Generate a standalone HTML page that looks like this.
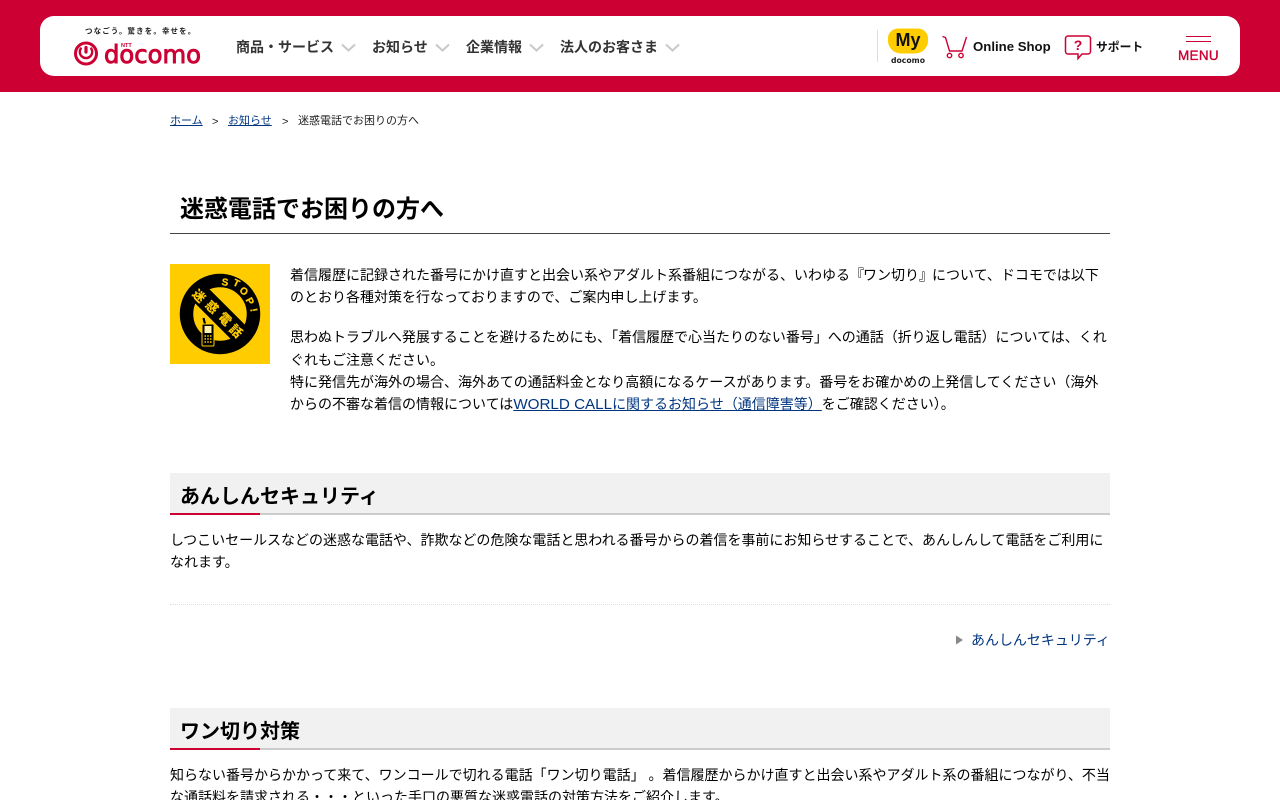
<!DOCTYPE html>
<html lang="ja"><head><meta charset="utf-8"><title>迷惑電話でお困りの方へ</title>
<style>
html,body{margin:0;padding:0;background:#fff;width:1280px;height:800px;overflow:hidden}
body{font-family:"Liberation Sans","Noto Sans CJK JP",sans-serif;color:#000;position:relative}
a{color:#003580}
.l{position:absolute;white-space:nowrap;font-size:14px;line-height:22px;left:170px;letter-spacing:0}
.t{left:290px}
.hdr{position:absolute;left:0;top:0;width:1280px;height:92px;background:#cc0033}
.bar{position:absolute;left:40px;top:16px;width:1200px;height:60px;background:#fff;border-radius:14px}
.nav{position:absolute;top:37px;font-size:14px;line-height:20px;font-weight:700;color:#333;white-space:nowrap}
.chev{position:absolute;top:43px}
.h2{position:absolute;left:170px;width:940px;height:40px;background:#f1f1f1;border-bottom:2px solid #ccc}
.h2 b{position:absolute;left:10px;top:10px;font-size:20px;line-height:28px;white-space:nowrap}
.h2 i{position:absolute;left:0;bottom:-2px;width:90px;height:2px;background:#cc0033}
.n{letter-spacing:-1px}
.w{font-size:15.200px;letter-spacing:0}
</style></head><body>
<div class="hdr"></div><div class="bar"></div>

<svg style="position:absolute;left:70px;top:24px" width="135" height="44" viewBox="0 0 135 44">
<text x="15" y="9.500" font-size="7.500" font-weight="700" fill="#222" letter-spacing="1.100" font-family="'Noto Sans CJK JP',sans-serif">つなごう。驚きを。幸せを。</text>
<circle cx="16" cy="29.500" r="10.500" fill="none" stroke="#cc0033" stroke-width="3"/>
<path d="M10.800 24.500A6.200 6.200 0 1 0 21.200 24.500" fill="none" stroke="#cc0033" stroke-width="2.400" stroke-linecap="round"/>
<path d="M16 23.500V28" fill="none" stroke="#cc0033" stroke-width="3.200" stroke-linecap="round"/>
<text x="34" y="39" font-size="25" font-weight="400" fill="#cc0033" stroke="#cc0033" stroke-width=".9" textLength="97" lengthAdjust="spacingAndGlyphs" font-family="'DejaVu Sans',sans-serif">docomo</text>
<text x="51" y="23" font-size="5.500" font-weight="700" fill="#cc0033" font-family="'Liberation Sans',sans-serif">NTT</text>
</svg>

<div class="nav" style="left:236px">商品・サービス</div>
<svg class="chev" style="left:341px" width="15" height="9"><path d="M1 1.500L7.500 7.500L14 1.500" fill="none" stroke="#c8c8c8" stroke-width="2"/></svg>
<div class="nav" style="left:372px">お知らせ</div>
<svg class="chev" style="left:435px" width="15" height="9"><path d="M1 1.500L7.500 7.500L14 1.500" fill="none" stroke="#c8c8c8" stroke-width="2"/></svg>
<div class="nav" style="left:466px">企業情報</div>
<svg class="chev" style="left:529px" width="15" height="9"><path d="M1 1.500L7.500 7.500L14 1.500" fill="none" stroke="#c8c8c8" stroke-width="2"/></svg>
<div class="nav" style="left:560px">法人のお客さま</div>
<svg class="chev" style="left:665px" width="15" height="9"><path d="M1 1.500L7.500 7.500L14 1.500" fill="none" stroke="#c8c8c8" stroke-width="2"/></svg>

<div style="position:absolute;left:877px;top:30px;width:1px;height:32px;background:#ddd"></div>
<svg style="position:absolute;left:885px;top:26px" width="46" height="40" viewBox="0 0 46 40">
<path d="M13 2.500h20a10 10 0 0 1 10 11a13 13 0 0 1-12 14h-16a13 13 0 0 1-12-14a10 10 0 0 1 10-11z" fill="#ffcc00"/>
<text x="23" y="20" text-anchor="middle" font-size="18" font-weight="700" fill="#111" font-family="'Liberation Sans',sans-serif">My</text>
<text x="23" y="37" text-anchor="middle" font-size="8" font-weight="700" fill="#222" font-family="'DejaVu Sans',sans-serif" textLength="34" lengthAdjust="spacingAndGlyphs">docomo</text>
</svg>
<svg style="position:absolute;left:941px;top:34px" width="28" height="26" viewBox="0 0 28 26" fill="none" stroke="#cc0033" stroke-width="1.400">
<path d="M1.500 2.500L4.500 3.500L8.500 17H21L25.500 3"/><circle cx="8.500" cy="21.500" r="2.200"/><circle cx="20" cy="21.500" r="2.200"/>
</svg>
<div style="position:absolute;left:973px;top:37px;font-size:13.200px;line-height:20px;font-weight:700;color:#111;white-space:nowrap">Online Shop</div>
<svg style="position:absolute;left:1064px;top:34px" width="28" height="27" viewBox="0 0 28 27" fill="none" stroke="#cc0033" stroke-width="1.500">
<path d="M4 2h20a2.500 2.500 0 0 1 2.500 2.500v13a2.500 2.500 0 0 1-2.500 2.500h-6l-4 4.500v-4.500H4a2.500 2.500 0 0 1-2.500-2.500v-13A2.500 2.500 0 0 1 4 2z"/>
<text x="14" y="16" text-anchor="middle" font-size="14" font-weight="700" fill="#cc0033" stroke="none" font-family="'Liberation Sans',sans-serif">?</text>
</svg>
<div style="position:absolute;left:1096px;top:38px;font-size:11.800px;line-height:18px;font-weight:700;color:#111;white-space:nowrap">サポート</div>
<div style="position:absolute;left:1186px;top:36px;width:25px;height:1px;background:#cc0033"></div>
<div style="position:absolute;left:1186px;top:41px;width:25px;height:1px;background:#cc0033"></div>
<div style="position:absolute;left:1178px;top:48px;font-size:13.500px;line-height:16px;font-weight:400;color:#cc0033;-webkit-text-stroke:.35px #cc0033;letter-spacing:.3px;white-space:nowrap">MENU</div>

<div style="position:absolute;left:170px;top:113px;font-size:11px;line-height:16px;white-space:nowrap;color:#222"><a href="#">ホーム</a></div>
<div style="position:absolute;left:212px;top:114px;font-size:11px;line-height:16px;color:#222">&gt;</div>
<div style="position:absolute;left:228px;top:113px;font-size:11px;line-height:16px;white-space:nowrap"><a href="#">お知らせ</a></div>
<div style="position:absolute;left:282px;top:114px;font-size:11px;line-height:16px;color:#222">&gt;</div>
<div style="position:absolute;left:298px;top:113px;font-size:11px;line-height:16px;white-space:nowrap;color:#222">迷惑電話でお困りの方へ</div>

<div style="position:absolute;left:180px;top:193px;font-size:24px;line-height:34px;font-weight:700;white-space:nowrap;color:#000">迷惑電話でお困りの方へ</div>
<div style="position:absolute;left:170px;top:233px;width:940px;height:1px;background:#444"></div>

<svg style="position:absolute;left:170px;top:264px" width="100" height="100" viewBox="0 0 100 100">
<rect width="100" height="100" fill="#ffcc00"/>
<circle cx="50" cy="50" r="33.500" fill="none" stroke="#000" stroke-width="13.500"/>
<path d="M26 26L74 74" stroke="#000" stroke-width="20"/>
<g font-family="'Noto Sans CJK JP',sans-serif" font-size="12.500" font-weight="900" fill="#ffcc00" text-anchor="middle">
<text x="29" y="36.500" transform="rotate(45 29 32)">迷</text>
<text x="42" y="47.500" transform="rotate(45 42 43)">惑</text>
<text x="55" y="59.500" transform="rotate(45 55 55)">電</text>
<text x="66" y="71.500" transform="rotate(45 66 67)">話</text>
</g>
<g font-family="'Liberation Sans',sans-serif" font-size="10" font-weight="700" fill="#ffcc00" stroke="#ffcc00" stroke-width=".3" text-anchor="middle">
<text x="55" y="21.500" transform="rotate(8 55 18)">S</text>
<text x="66.500" y="22.500" transform="rotate(25 66.500 19)">T</text>
<text x="74" y="30.500" transform="rotate(42 74 27)">O</text>
<text x="80" y="40.500" transform="rotate(62 80 37)">P</text>
<text x="84" y="49.500" transform="rotate(80 84 46)">!</text>
</g>
<path d="M33.500 54L35 60" stroke="#000" stroke-width="2.200"/>
<rect x="32" y="60" width="12" height="22" rx="1" fill="#000" stroke="#ffcc00" stroke-width="1"/>
<rect x="34.500" y="62" width="7" height="7" fill="#fff2b0"/>
<path d="M34.500 72h7M34.500 75h7M34.500 78h7" stroke="#ffcc00" stroke-width="1.500" stroke-dasharray="1.500 1.250"/>
</svg>

<div class="l t" style="top:264px">着信履歴に記録された番号にかけ直すと出会い系やアダルト系番組につながる、いわゆる<span class="n">『</span>ワン切り<span class="n">』</span>について、ドコモでは以下</div>
<div class="l t" style="top:286px">のとおり各種対策を行なっておりますので、ご案内申し上げます。</div>
<div class="l t" style="top:326px;letter-spacing:-.02px">思わぬトラブルへ発展することを避けるためにも、「着信履歴で心当たりのない番号」への通話（折り返し電話）については、くれ</div>
<div class="l t" style="top:349px">ぐれもご注意ください。</div>
<div class="l t" style="top:371px">特に発信先が海外の場合、海外あての通話料金となり高額になるケースがあります。番号をお確かめの上発信してください（海外</div>
<div class="l t" style="top:393px">からの不審な着信の情報については<a href="#"><span class="w">WORLD CALL</span>に関するお知らせ（通信障害等）</a>をご確認ください）。</div>

<div class="h2" style="top:473px"><b>あんしんセキュリティ</b><i></i></div>
<div class="l" style="top:529px;letter-spacing:-.015px">しつこいセールスなどの迷惑な電話や、詐欺などの危険な電話と思われる番号からの着信を事前にお知らせすることで、あんしんして電話をご利用に</div>
<div class="l" style="top:551px">なれます。</div>
<div style="position:absolute;left:170px;top:604px;width:940px;border-top:1px dotted #ddd"></div>
<svg style="position:absolute;left:955px;top:635px" width="9" height="10"><path d="M1 0.500L8 5L1 9.500z" fill="#888"/></svg>
<div class="l" style="left:971px;top:629px;color:#003580;letter-spacing:-.03px">あんしんセキュリティ</div>

<div class="h2" style="top:708px"><b>ワン切り対策</b><i></i></div>
<div class="l" style="top:764px">知らない番号からかかって来て、ワンコールで切れる電話「ワン切り電話」 。着信履歴からかけ直すと出会い系やアダルト系の番組につながり、不当</div>
<div class="l" style="top:786px">な通話料を請求される・・・といった手口の悪質な迷惑電話の対策方法をご紹介します。</div>
</body></html>
